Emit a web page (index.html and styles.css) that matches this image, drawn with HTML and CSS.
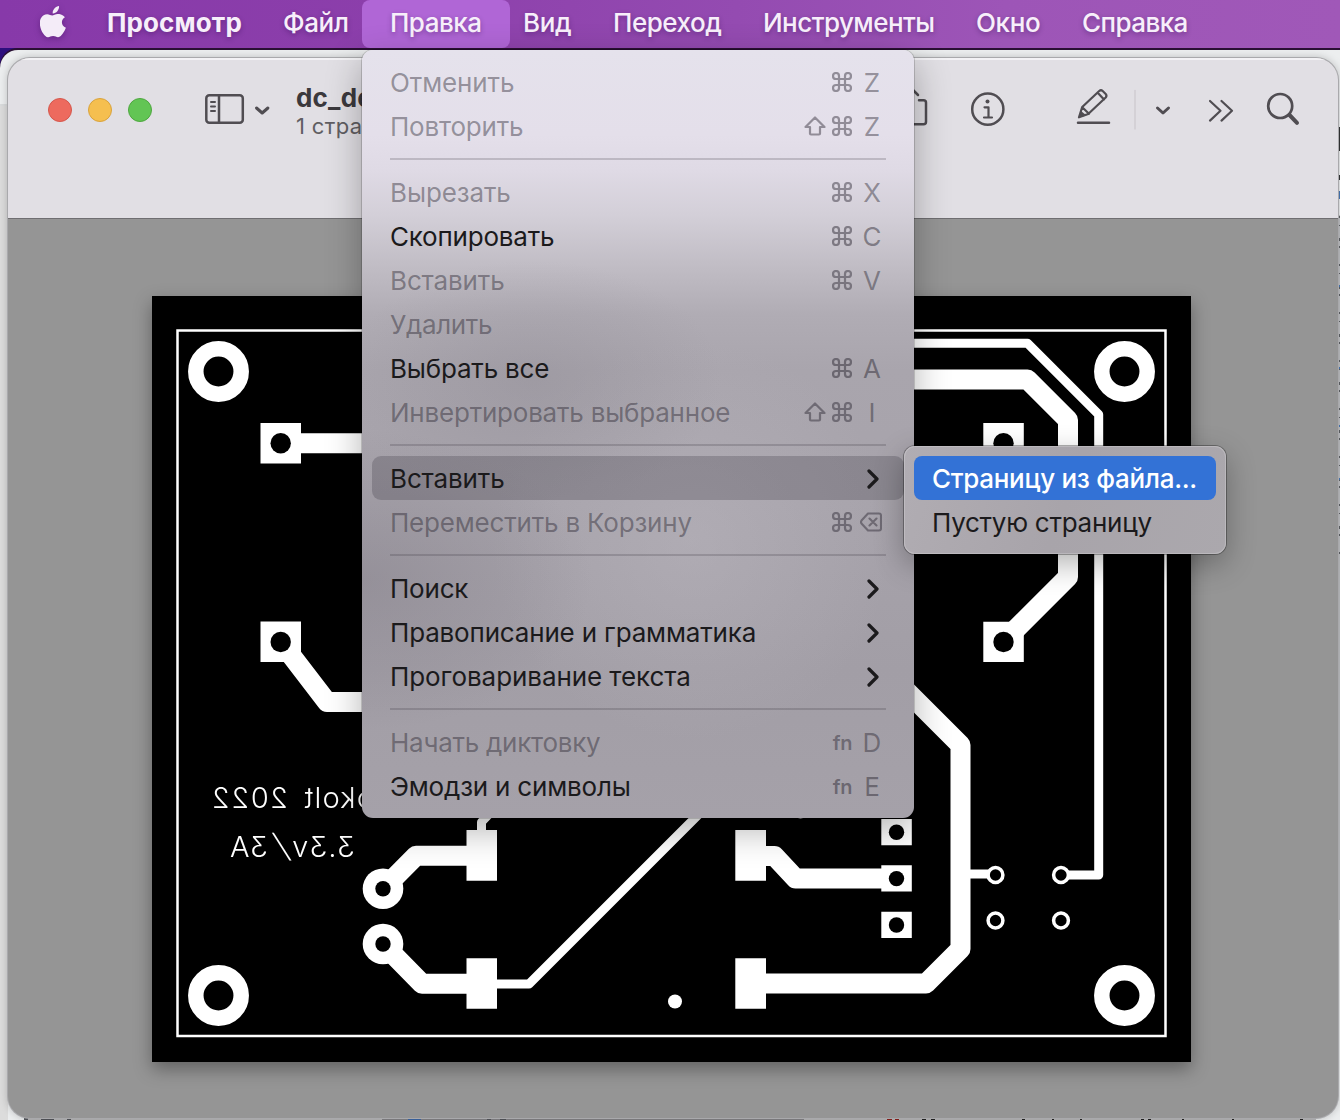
FILE: index.html
```html
<!DOCTYPE html>
<html lang="ru">
<head>
<meta charset="utf-8">
<title>Просмотр</title>
<link rel="stylesheet" href="styles.css">
</head>
<body>
<svg class="defs" width="0" height="0" aria-hidden="true">
  <symbol id="cmd" viewBox="0 0 20 20"><path d="M7 7V4a3 3 0 1 0-3 3h12a3 3 0 1 0-3-3v12a3 3 0 1 0 3-3H4a3 3 0 1 0 3 3z" fill="none" stroke="currentColor" stroke-width="2.200"/></symbol>
  <symbol id="shift" viewBox="0 0 22 20"><path d="M11 1.500L20.500 11H16v6.500q0 1-1 1H7q-1 0-1-1V11H1.500z" fill="none" stroke="currentColor" stroke-width="2.200" stroke-linejoin="round"/></symbol>
  <symbol id="del" viewBox="0 0 22 20"><path d="M8 1.500H19q2 0 2 2v13q0 2-2 2H8L1.500 11.500q-1-1.500 0-3zM9.500 6.500l7 7M16.500 6.500l-7 7" fill="none" stroke="currentColor" stroke-width="2.100" stroke-linejoin="round" stroke-linecap="round"/></symbol>
  <symbol id="arrow" viewBox="0 0 12 20"><path d="M2 2l8 8-8 8" fill="none" stroke="#1b1a1c" stroke-width="3.200" stroke-linejoin="round" stroke-linecap="round"/></symbol>
</svg>
<div class="desktop">
  <nav class="menubar">
    <svg class="apple" width="26" height="32" viewBox="0 0 26 32"><path fill="#f4ecf8" d="M19 0c.3 2-.5 3.800-1.700 5.200C16 6.700 14.300 7.600 12.700 7.400c-.2-1.800.6-3.700 1.700-4.900C15.600 1.100 17.500.1 19 0zM24.900 11.300c-2 1.300-3 2.900-3 5 0 2.500 1.400 4.400 4 5.500-.7 2-1.800 4-3.100 5.800-1.300 1.900-2.600 3.600-4.700 3.600-2 0-2.600-1.200-5-1.200s-3.200 1.200-5 1.300c-2 .1-3.500-1.900-4.900-3.800C.6 23.700-1.600 16.800.9 12.200 2.300 9.700 4.700 8.200 7.200 8.200c2 0 3.800 1.300 5 1.300s3.500-1.600 5.900-1.400c1 0 4.500.4 6.800 3.200z"/></svg>
    <span class="app">Просмотр</span>
    <span class="m2">Файл</span>
    <span class="open">Правка</span>
    <span class="m4">Вид</span>
    <span class="m5">Переход</span>
    <span class="m6">Инструменты</span>
    <span class="m7">Окно</span>
    <span class="m8">Справка</span>
  </nav>

  <div class="backwin"></div>
  <svg class="peek" width="1340" height="1070" viewBox="0 50 1340 1070">
    <path d="M0 105H8" stroke="#c6c8c9" stroke-width="1"/>
    <path d="M0 106H8V1120H0z" fill="#dcdcdc"/>
    <path d="M1337 215h3V920h-3z" fill="#bfc1c4"/>
    <path d="M1339 216V560" stroke="#5f6267" stroke-width="2" stroke-dasharray="2 7 1 12 3 5 2 16"/>
    <path d="M1338 127h2v24h-2zM1338 175h2v5h-2z" fill="#333436"/>
    <path d="M1339 191v8M1339 285v2M1339 367v2M1339 425v2M1339 478v2" stroke="#4778b8" stroke-width="2"/>
    <path d="M24 1118H1316v2H24z" fill="#b9b9ba"/>
    <path d="M382 1118H804v2H382z" fill="#858488"/>
    <path d="M24 1119h4M41 1119h13M67 1119h4M487 1119h4M500 1119h6" stroke="#54565c" stroke-width="2"/>
    <path d="M408 1119h13" stroke="#3d68a8" stroke-width="2"/>
    <path d="M887 1119h5M895 1119h4" stroke="#8e1e1b" stroke-width="2"/>
    <path d="M922 1119h4M931 1119h4M1022 1119h3M1052 1119h2M1080 1119h2M1141 1119h3M1148 1119h3M1182 1119h2M1232 1119h2M1300 1119h3" stroke="#222" stroke-width="2"/>
  </svg>

  <main class="window">
    <header class="toolbar">
      <div class="lights"><i class="red"></i><i class="yellow"></i><i class="green"></i></div>
      <svg class="side" width="66" height="32" viewBox="0 0 66 32" fill="none" stroke="#504d52" stroke-width="2.500" stroke-linecap="round" stroke-linejoin="round"><rect x="1.300" y="2.300" width="36.500" height="27.500" rx="3"/><path d="M14 2.500V29.500"/><path d="M6 9h4M6 13.500h4M6 18h4" stroke-width="2"/><path d="M51.500 15l5.700 5 5.700-5" stroke-width="3"/></svg>
      <div class="title"><b>dc_de</b><small>1 стра</small></div>
      <svg class="tools" width="438" height="60" viewBox="900 80 438 60" fill="none" stroke="#504d52" stroke-width="2.500" stroke-linecap="round" stroke-linejoin="round">
        <path d="M909 86l9 9M919 100.300h4.500q2.500 0 2.500 2.500v19q0 2.500-2.500 2.500H905"/>
        <circle cx="987.800" cy="109.200" r="15.600"/><circle cx="987.500" cy="101.500" r="2" fill="#504d52" stroke="none"/><path d="M984.500 107.300h4V117.500M984 117.500h8" stroke-width="2.200"/>
        <path d="M1078 122.700h31" /><path d="M1079 117.300l3.200-10.300 17-16q1.800-1.500 3.500 0l3 3q1.500 1.700 0 3.500l-17.500 16.500zM1097.500 92.500l6.500 7M1082.500 107.500l6.500 6.300" stroke-width="2.200"/><path d="M1079 117.500l2-6.500 5.500 4.500z" fill="#504d52" stroke="none"/>
        <path d="M1135 90.500V129" stroke="#cfccd2" stroke-width="1.500"/>
        <path d="M1157.500 108l5.500 5 5.500-5" stroke-width="3"/>
        <path d="M1210 101l10.500 9.800-10.500 9.800M1221.500 101l10.500 9.800-10.500 9.800" stroke-width="2.200"/>
        <circle cx="1280.200" cy="106" r="12" stroke-width="2.700"/><path d="M1289.500 115l7.500 7.800" stroke-width="4"/>
      </svg>
    </header>
    <section class="canvas">
      <svg class="board" width="1039" height="766" viewBox="152 296 1039 766">
        <path d="M152 296H1191V1062H152z" fill="#000"/>
        <path d="M177.500 330.500H1165.500V1036H177.500z" fill="none" stroke="#fff" stroke-width="2.500"/>
        <g fill="none" stroke="#fff" stroke-linejoin="round">
          <g stroke-width="15.500"><circle cx="218.500" cy="371.500" r="22.700"/><circle cx="1124.500" cy="371.500" r="22.700"/><circle cx="218.500" cy="995.500" r="22.700"/><circle cx="1124.500" cy="995.500" r="22.700"/></g>
          <g stroke-width="20">
            <path d="M281 443.300H400M281 642l46 60H400"/>
            <path d="M880 379.500H1027.500L1068 420V577L1003 642"/>
            <path d="M880 664.500L960.500 745V949L926 983.500H750"/>
            <path d="M750 856h24.500l21 22.500H896"/>
            <path d="M383 889l33-33.300H481M383 944l39 39.700H481"/>
          </g>
          <g stroke-width="9">
            <path d="M880 343.300H1027.500L1098.700 414.500V875H1061"/>
            <path d="M960 874H995"/>
            <path d="M481 984H529L720 793"/>
            <path d="M481.500 835V822L493 810"/>
          </g>
        </g>
        <g fill="#fff"><path d="M260.500 423h40.500v40.500h-40.500zM260.500 621.500h40.500V662h-40.500zM983.300 423h40.500v40.500h-40.500zM983.300 621.700h40.500v40.300h-40.500zM466.500 830h30.500v50.700h-30.500zM466.500 958.300h30.500v50.500h-30.500zM735.300 830h30.700v50.700h-30.700zM735.300 958.300h30.700v50.500h-30.700zM881.300 819h30.500v26.300h-30.500zM881.300 865.300h30.500v26.300h-30.500zM881.300 911.700h30.500V938h-30.500z"/><circle cx="383" cy="888.700" r="20.300"/><circle cx="383" cy="944" r="20.300"/><circle cx="675" cy="1001.500" r="7"/><circle cx="800.500" cy="811.500" r="7"/></g>
        <g fill="#000"><circle cx="280.700" cy="443.300" r="10.200"/><circle cx="280.700" cy="642" r="10.200"/><circle cx="1003.500" cy="443.300" r="10.200"/><circle cx="1003.500" cy="642" r="10.200"/><circle cx="383" cy="888.700" r="7.700"/><circle cx="383" cy="944" r="7.700"/><circle cx="896.500" cy="832.200" r="7.700"/><circle cx="896.500" cy="878.600" r="7.700"/><circle cx="896.500" cy="925" r="7.700"/></g>
        <g fill="#000" stroke="#fff" stroke-width="3.500"><circle cx="995.500" cy="875" r="7.400"/><circle cx="1061" cy="875" r="7.400"/><circle cx="995.500" cy="920.500" r="7.400"/><circle cx="1061" cy="920.500" r="7.400"/></g>
        <g class="silk" transform="scale(-1 1)">
          <text x="-374" y="808" textLength="70">okolt</text>
          <text x="-288" y="808" textLength="76">2022</text>
          <text x="-355" y="857" textLength="63">3.3v</text>
          <text transform="translate(-291 857) skewX(-20) scale(1.1 1.1)">/</text>
          <text x="-268" y="857" textLength="38">3A</text>
        </g>
      </svg>
    </section>
  </main>

  <div class="menu edit">
    <div class="row off"><span class="t1">Отменить</span><kbd><svg class="cmd"><use href="#cmd"/></svg><b>Z</b></kbd></div>
    <div class="row off"><span class="t2">Повторить</span><kbd><svg class="shift"><use href="#shift"/></svg><svg class="cmd"><use href="#cmd"/></svg><b>Z</b></kbd></div>
    <hr>
    <div class="row off"><span class="t3">Вырезать</span><kbd><svg class="cmd"><use href="#cmd"/></svg><b>X</b></kbd></div>
    <div class="row"><span class="t4">Скопировать</span><kbd><svg class="cmd"><use href="#cmd"/></svg><b>C</b></kbd></div>
    <div class="row off"><span class="t5">Вставить</span><kbd><svg class="cmd"><use href="#cmd"/></svg><b>V</b></kbd></div>
    <div class="row off"><span class="t6">Удалить</span></div>
    <div class="row"><span class="t7">Выбрать все</span><kbd><svg class="cmd"><use href="#cmd"/></svg><b>A</b></kbd></div>
    <div class="row off"><span class="t8">Инвертировать выбранное</span><kbd><svg class="shift"><use href="#shift"/></svg><svg class="cmd"><use href="#cmd"/></svg><b>I</b></kbd></div>
    <hr>
    <div class="row hover"><span class="t5">Вставить</span><svg class="arrow"><use href="#arrow"/></svg></div>
    <div class="row off"><span class="t9">Переместить в Корзину</span><kbd><svg class="cmd"><use href="#cmd"/></svg><svg class="del"><use href="#del"/></svg></kbd></div>
    <hr>
    <div class="row"><span class="t10">Поиск</span><svg class="arrow"><use href="#arrow"/></svg></div>
    <div class="row"><span class="t11">Правописание и грамматика</span><svg class="arrow"><use href="#arrow"/></svg></div>
    <div class="row"><span class="t12">Проговаривание текста</span><svg class="arrow"><use href="#arrow"/></svg></div>
    <hr>
    <div class="row off"><span class="t13">Начать диктовку</span><kbd><em>fn</em><b>D</b></kbd></div>
    <div class="row"><span class="t14">Эмодзи и символы</span><kbd><em>fn</em><b>E</b></kbd></div>
  </div>

  <div class="menu sub">
    <div class="row active"><span class="s1">Страницу из файла...</span></div>
    <div class="row"><span class="s2">Пустую страницу</span></div>
  </div>
</div>
</body>
</html>
```
FILE: styles.css
```css
* { box-sizing: border-box; }
body { margin: 0; font-family: Inter, "Liberation Sans", sans-serif; font-size: 26px; }
.defs { position: absolute; }
.desktop { position: relative; width: 1340px; height: 1120px; overflow: hidden; background: #2d0f7d; }

.menubar {
  display: grid;
  grid-template-columns: 67px 176px 107px 133px 90px 150px 213px 106px 1fr;
  padding-left: 40px;
  height: 48px;
  line-height: 46px;
  color: #f7effa;
  font-weight: 500;
  white-space: nowrap;
  background: linear-gradient(90deg, #8739a9 0%, #8c3fab 30%, #944bb1 55%, #9d55b7 75%, #a058b8 100%);
  text-shadow: 0 2px 5px rgba(40, 0, 70, .35);
}
.apple { margin-top: 6px; filter: drop-shadow(0 2px 3px rgba(40, 0, 70, .35)); }
.menubar .app { font-weight: 700; letter-spacing: .12px; }
.menubar .open { margin-left: -28px; width: 148px; padding-left: 28px; border-radius: 8px; background: #b066d6; letter-spacing: -.5px; }
.m2 { letter-spacing: -.4px; }
.m4 { letter-spacing: -.3px; }
.m5 { letter-spacing: -.45px; }
.m6 { letter-spacing: -.55px; }
.m7 { letter-spacing: -.35px; }
.m8 { letter-spacing: -.55px; }

.backwin { position: absolute; left: 0; top: 50px; width: 1344px; height: 1080px; border-radius: 18px 0 0 0; background: #eceeef; box-shadow: 0 -2px #2a1034; }
.peek { position: absolute; left: 0; top: 50px; }

.window { position: absolute; left: 8px; top: 58px; width: 1330px; height: 1060px; border-radius: 22px; overflow: hidden; background: #959595; box-shadow: 0 0 0 1px #a9a9ac, 0 0 8px rgba(0, 0, 0, .25); }
.toolbar { display: flex; height: 161px; background: #e1dfe4; border-bottom: 1px solid #6f6e71; box-shadow: inset 0 2px #f3f2f5; }
.lights { display: flex; gap: 16px; padding: 40px 0 0 40px; }
.lights i { width: 24px; height: 24px; border-radius: 50%; }
.red { background: #ed6a5e; border: 1px solid #d5574c; }
.yellow { background: #f5bf4f; border: 1px solid #d9a33d; }
.green { background: #62c554; border: 1px solid #4ea73f; }
.side { flex: none; margin: 35px 0 0 53px; }
.title { flex: none; width: 72px; margin: 24px 0 0 25px; white-space: nowrap; }
.title b { display: block; font-size: 26px; line-height: 31px; letter-spacing: .2px; color: #3b393d; }
.title small { display: block; font-size: 22px; line-height: 27px; letter-spacing: .35px; color: #605e62; }
.tools { margin: 22px 0 0 532px; flex: none; }
.canvas { padding: 77px 0 0 144px; }
.board { display: block; filter: drop-shadow(0 7px 9px rgba(0, 0, 0, .35)); }
.silk text { font-size: 29px; font-weight: 300; fill: #fff; font-feature-settings: "cv09"; }

.menu { position: absolute; border-radius: 11px; color: #1b1a1c; white-space: nowrap; }
.edit {
  left: 362px; top: 50px; width: 552px; height: 768px; padding: 10px 28px;
  background:
    radial-gradient(ellipse 230px 150px at 0 530px, rgba(125, 120, 130, .4), transparent),
    radial-gradient(ellipse 190px 120px at 170px 330px, rgba(135, 131, 140, .3), transparent),
    radial-gradient(ellipse 200px 200px at 330px 490px, rgba(190, 186, 194, .4), transparent),
    linear-gradient(180deg, #e5e2ec 0, #e4dfea 85px, #dfdae5 120px, #d3cfd8 165px, #c1bdc5 215px, #b0acb4 265px, #a9a5ad 320px, #a7a3ab 450px, #a29ea6 620px, #a5a1a9 768px);
  box-shadow: 0 0 0 1px rgba(0, 0, 0, .16), 0 12px 36px rgba(0, 0, 0, .3);
}
.row { display: flex; align-items: center; justify-content: space-between; height: 44px; line-height: 44px; }
.row > span, kbd { padding-top: 2px; }
.off > span { color: rgba(35, 30, 42, .43); }
.edit hr { height: 2px; margin: 10px 0; border: 0; background: rgba(45, 40, 50, .2); }
kbd { display: flex; align-items: center; font: inherit; color: rgba(35, 30, 42, .46); }
.off kbd { color: rgba(35, 30, 42, .43); }
kbd b { width: 28px; margin: 0 0 0 5px; text-align: center; font-weight: 400; }
kbd em { margin-right: 1px; font-style: normal; font-size: 20px; font-weight: 600; letter-spacing: -.4px; }
kbd svg { position: relative; top: -1px; left: -1px; }
.cmd { width: 20px; height: 20px; margin-left: 6px; }
.shift { width: 22px; height: 20px; }
.del { width: 22px; height: 20px; margin: 0 3px 0 8px; }
.arrow { width: 12px; height: 20px; margin: 2px 7px 0 0; }
.hover { margin: 0 -18px; padding: 0 18px; border-radius: 9px; background: rgba(60, 55, 65, .27); }
.t1, .t3, .t5 { letter-spacing: -.13px; }
.t2, .t4, .t7, .t9, .t10, .t14 { letter-spacing: -.2px; }
.t6 { letter-spacing: -.35px; }
.t8 { letter-spacing: -.22px; }
.t11 { letter-spacing: -.17px; }
.t12 { letter-spacing: -.07px; }
.t13 { letter-spacing: -.27px; }
.s1 { letter-spacing: -.3px; }
.s2 { letter-spacing: -.27px; }

.sub {
  left: 904px; top: 446px; width: 322px; height: 108px; padding: 10px;
  background: linear-gradient(110deg, #b1adb3, #a8a4aa 50%, #aba8ad);
  box-shadow: inset 0 0 0 1px rgba(255, 255, 255, .2), 0 0 0 1px rgba(0, 0, 0, .3), 0 10px 30px rgba(0, 0, 0, .3);
}
.sub .row { padding-left: 18px; }
.active { border-radius: 8px; background: #3372d6; color: #fff; font-weight: 500; }
```
